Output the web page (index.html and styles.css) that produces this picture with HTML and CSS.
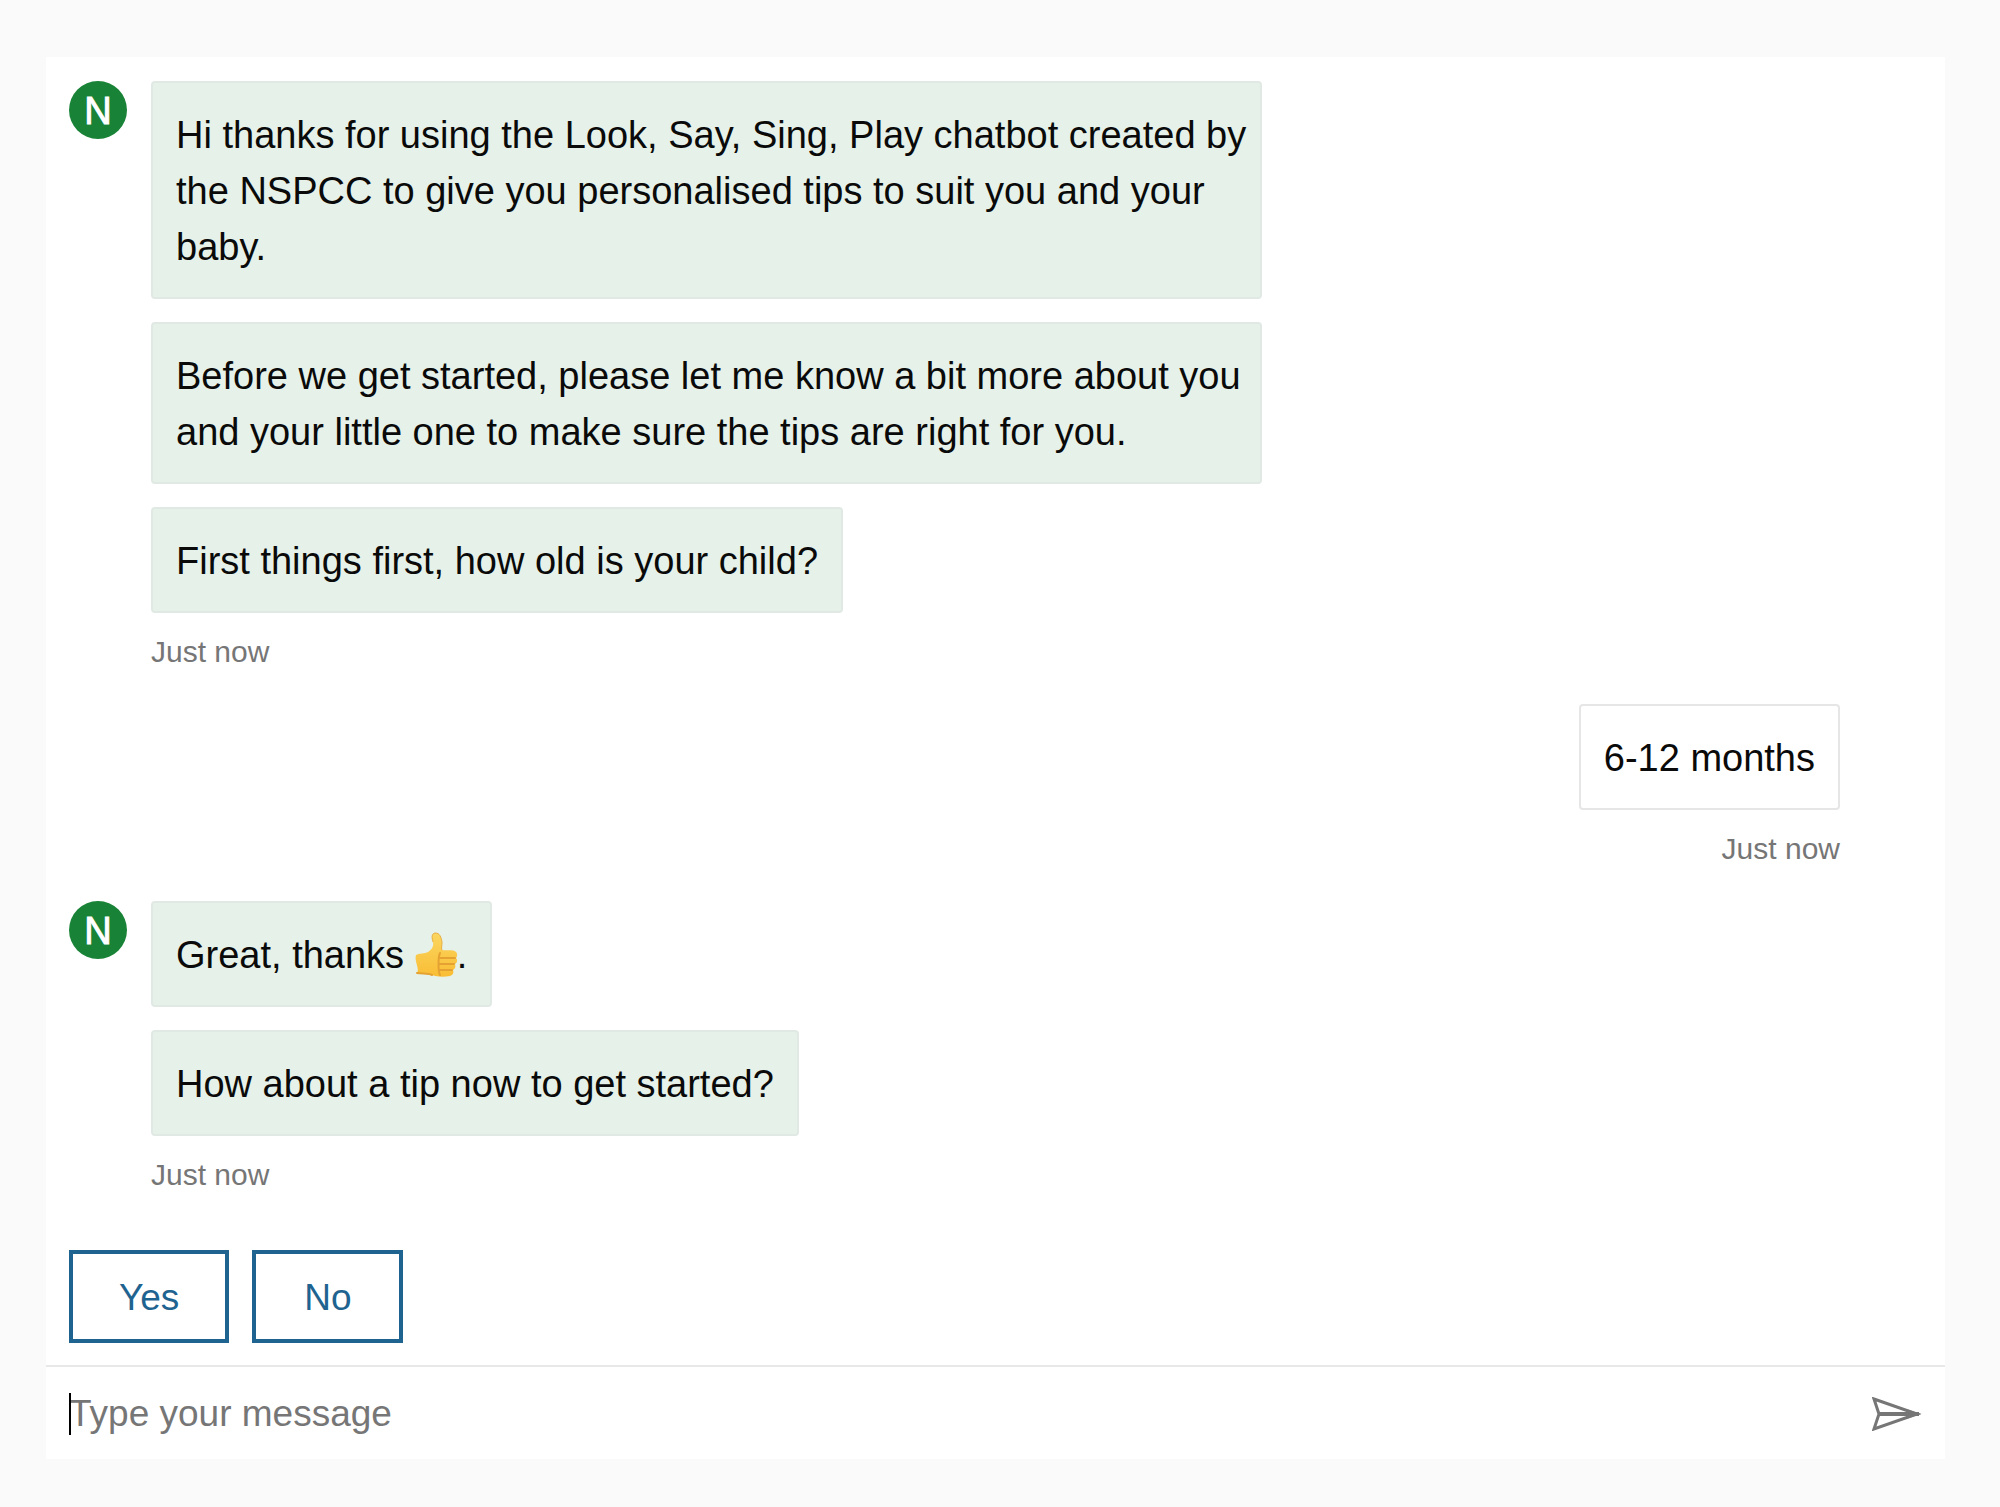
FILE: index.html
```html
<!DOCTYPE html>
<html lang="en">
<head>
<meta charset="utf-8">
<meta name="viewport" content="width=device-width, initial-scale=1">
<title>Look, Say, Sing, Play chatbot</title>
<link rel="stylesheet" href="styles.css">
</head>
<body>
<main class="chat">
  <section class="transcript" aria-label="Conversation">
    <div class="turn">
      <div class="avatar">N</div>
      <div class="stack">
        <p class="bubble bubble-long">Hi thanks for using the Look, Say, Sing, Play chatbot created by the NSPCC to give you personalised tips to suit you and your baby.</p>
        <p class="bubble bubble-long">Before we get started, please let me know a bit more about you and your little one to make sure the tips are right for you.</p>
        <p class="bubble">First things first, how old is your child?</p>
        <p class="time">Just now</p>
      </div>
    </div>
    <div class="turn turn-user">
      <div class="stack">
        <p class="bubble">6-12 months</p>
        <p class="time">Just now</p>
      </div>
    </div>
    <div class="turn">
      <div class="avatar">N</div>
      <div class="stack">
        <p class="bubble">Great, thanks <svg class="emoji" viewBox="0 0 46 46" role="img" aria-label="thumbs up">
          <defs>
            <linearGradient id="skin" x1="0" y1="0" x2="0" y2="1">
              <stop offset="0" stop-color="#fbd660"/>
              <stop offset="1" stop-color="#f9bd35"/>
            </linearGradient>
          </defs>
          <path fill="url(#skin)" d="M3 23C6 21 12 22 15 20C18 18 21 15 20 10C19 6 18 2 22 1C27 1 28 5 29 10C29 14 28 17 29 18C33 19 40 17 43 20C45 22 44 25 43 26C45 28 44 31 42 32C43 35 42 37 40 38C41 41 40 43 37 44C31 45 24 45 19 43C15 41 9 42 4 41C7 37 1 29 3 23Z"/>
          <path fill="none" stroke="#e5a232" stroke-width="2" stroke-linecap="round" d="M27 26H42M27 32H41M27 38H39M27 21C25 25 25 39 27 43M4 41C9 42 15 41 19 43"/>
          <path fill="none" stroke="#e8ae40" stroke-width="1" d="M20 10C19 6 18 2 22 1C27 1 28 5 29 10C29 14 28 17 29 18"/>
        </svg>.</p>
        <p class="bubble">How about a tip now to get started?</p>
        <p class="time">Just now</p>
      </div>
    </div>
  </section>
  <div class="replies">
    <button class="reply" type="button">Yes</button>
    <button class="reply" type="button">No</button>
  </div>
  <form class="composer">
    <div class="field">
      <input class="message" type="text" placeholder="Type your message" aria-label="Type your message">
      <span class="caret"></span>
    </div>
    <button class="send" type="button" aria-label="Send">
      <svg class="send-icon" viewBox="0 0 50 34" aria-hidden="true">
        <path fill="none" stroke="#767676" stroke-width="3" d="M2 2L45 17L2 32L7 17Z"/>
        <path fill="none" stroke="#767676" stroke-width="4" d="M7 17H47"/>
        <path fill="#767676" d="M34 12L49 17L34 22Z"/>
      </svg>
    </button>
  </form>
</main>
</body>
</html>
```

FILE: styles.css
```css
* {
  box-sizing: border-box;
}

body {
  margin: 0;
  padding: 57px 55px 48px 46px;
  background: #fafafa;
  color: #0a0a0a;
  font: 38px/56px "Liberation Sans", Arial, sans-serif;
}

p {
  margin: 0;
}

button,
input {
  font: inherit;
}

.chat {
  background: #fff;
}

.transcript {
  display: flex;
  flex-direction: column;
  gap: 34px;
  padding: 24px 23px 0;
}

.turn {
  display: flex;
  align-items: flex-start;
  gap: 24px;
}

.turn-user {
  justify-content: flex-end;
  padding-right: 82px;
}

.avatar {
  display: flex;
  flex: none;
  align-items: center;
  justify-content: center;
  width: 58px;
  height: 58px;
  padding-top: 2px;
  border-radius: 50%;
  background: #188336;
  color: #fff;
  -webkit-text-stroke: 1px #fff;
}

.stack {
  display: flex;
  flex-direction: column;
  align-items: flex-start;
  gap: 23px;
  max-width: 1111px;
}

.turn-user .stack {
  align-items: flex-end;
}

.bubble {
  padding: 24px 23px 22px;
  border: 2px solid #e1e9e4;
  border-radius: 4px;
  background: #e6f1e9;
}

.bubble-long {
  padding-right: 12px;
}

.turn-user .bubble {
  border-color: #e6e6e6;
  background: #fff;
}

.time {
  margin-top: -2px;
  color: #767676;
  font-size: 30px;
  line-height: 36px;
}

.emoji {
  width: 46px;
  height: 46px;
  margin: -8px -2px;
  vertical-align: -2px;
}

.replies {
  display: flex;
  gap: 23px;
  padding: 57px 23px 22px;
}

.reply {
  min-width: 151px;
  height: 93px;
  padding: 2px 46px 0;
  border: 4px solid #1f6390;
  background: #fff;
  color: #1f6390;
  font-size: 37px;
}

.composer {
  display: flex;
  align-items: center;
  height: 94px;
  padding: 2px 23px 0;
  border-top: 2px solid #e8e8e8;
}

.field {
  position: relative;
  flex: 1;
}

.message {
  display: block;
  width: 100%;
  padding: 0;
  border: 0;
  outline: 0;
  background: none;
  color: #0a0a0a;
  font-size: 37px;
}

.message::placeholder {
  color: #767676;
  opacity: 1;
}

.caret {
  position: absolute;
  top: 7px;
  left: 0;
  width: 2px;
  height: 42px;
  background: #000;
}

.send {
  display: flex;
  padding: 0;
  border: 0;
  background: none;
}

.send-icon {
  width: 50px;
  height: 34px;
}
```
